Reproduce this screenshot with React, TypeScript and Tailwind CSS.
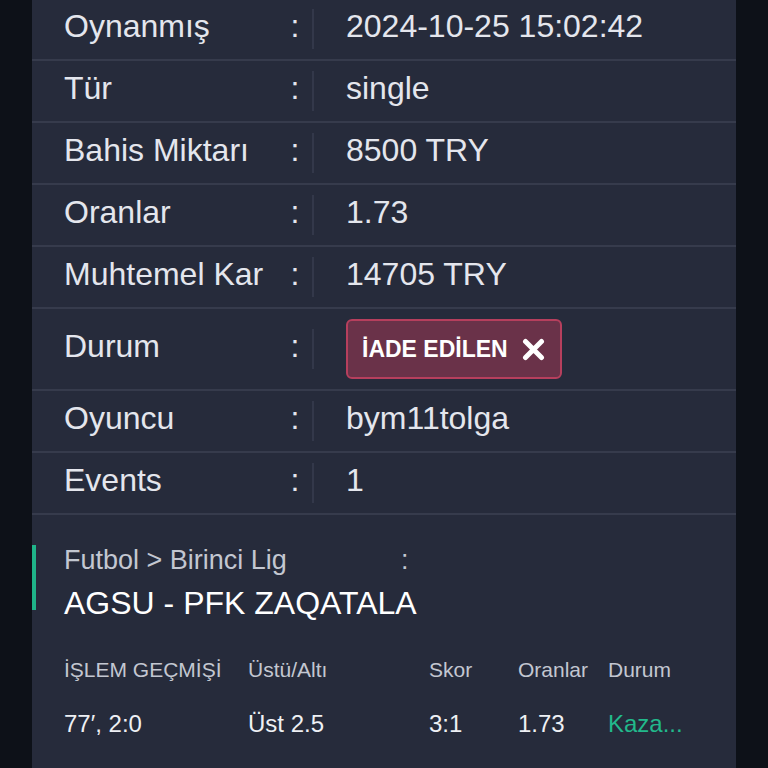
import { ReactNode } from 'react';

interface DetailRow {
  label: string;
  value: ReactNode;
  tall?: boolean;
}

const font = { fontFamily: '"Liberation Sans", Arial, sans-serif' };

function RefundBadge() {
  return (
    <div className="flex items-center gap-[14px] h-[60px] pl-[14px] pr-[15px] rounded-[6px] border-2 border-[#b63f5d] bg-[#6a3249]">
      <span className="text-[23px] font-bold text-white leading-none">İADE EDİLEN</span>
      <svg width="23" height="23" viewBox="0 0 23 23" fill="none">
        <path d="M3.5 3.5L19.5 19.5M19.5 3.5L3.5 19.5" stroke="#ffffff" strokeWidth="5" strokeLinecap="round" />
      </svg>
    </div>
  );
}

const ROWS: DetailRow[] = [
  { label: 'Oynanmış', value: '2024-10-25 15:02:42' },
  { label: 'Tür', value: 'single' },
  { label: 'Bahis Miktarı', value: '8500 TRY' },
  { label: 'Oranlar', value: '1.73' },
  { label: 'Muhtemel Kar', value: '14705 TRY' },
  { label: 'Durum', value: <RefundBadge />, tall: true },
  { label: 'Oyuncu', value: 'bym11tolga' },
  { label: 'Events', value: '1' },
];

const HISTORY_HEAD = ['İŞLEM GEÇMİŞİ', 'Üstü/Altı', 'Skor', 'Oranlar', 'Durum'];

export default function App() {
  return (
    <div className="h-[768px] w-[768px] overflow-hidden bg-[#0d1118]" style={font}>
      <div className="mx-[32px] -mt-px h-[800px] bg-[#262b3b]">
        {ROWS.map((row) => (
          <div
            key={row.label}
            className={`flex items-center pl-[32px] border-b-2 border-[#363b4c] ${row.tall ? 'h-[82px]' : 'h-[62px]'}`}
          >
            <span className="w-[226px] -mt-[6px] text-[32px] leading-[36px] text-[#e4e6ed]">{row.label}</span>
            <span className="w-[10px] -mt-[6px] text-center text-[32px] leading-[36px] text-[#e4e6ed]">:</span>
            <span className="ml-[12px] w-[2px] h-[40px] bg-[#33384a]" />
            <div className={`ml-[32px] text-[32px] leading-[36px] text-[#e4e6ed] ${row.tall ? '' : '-mt-[6px]'}`}>
              {row.value}
            </div>
          </div>
        ))}

        <div className="pt-[30px]">
          <div className="h-[65px] border-l-4 border-[#1fb489] pl-[28px]">
            <div className="flex text-[27px] leading-[30px] text-[#c3c7d1]">
              <span className="w-[337px]">Futbol &gt; Birinci Lig</span>
              <span>:</span>
            </div>
            <div className="mt-[10px] text-[32px] leading-[36px] text-white">AGSU - PFK ZAQATALA</div>
          </div>

          <div className="mt-[47px] pl-[32px] grid grid-cols-[184px_181px_89px_90px_90px] text-[21px] leading-[26px] text-[#c3c7d1]">
            {HISTORY_HEAD.map((h) => (
              <span key={h}>{h}</span>
            ))}
          </div>
          <div className="mt-[26px] pl-[32px] grid grid-cols-[184px_181px_89px_90px_90px] text-[24px] leading-[30px] text-[#eef0f4]">
            <span>77′, 2:0</span>
            <span>Üst 2.5</span>
            <span>3:1</span>
            <span>1.73</span>
            <span className="text-[#22b98b]">Kaza...</span>
          </div>
        </div>
      </div>
    </div>
  );
}
